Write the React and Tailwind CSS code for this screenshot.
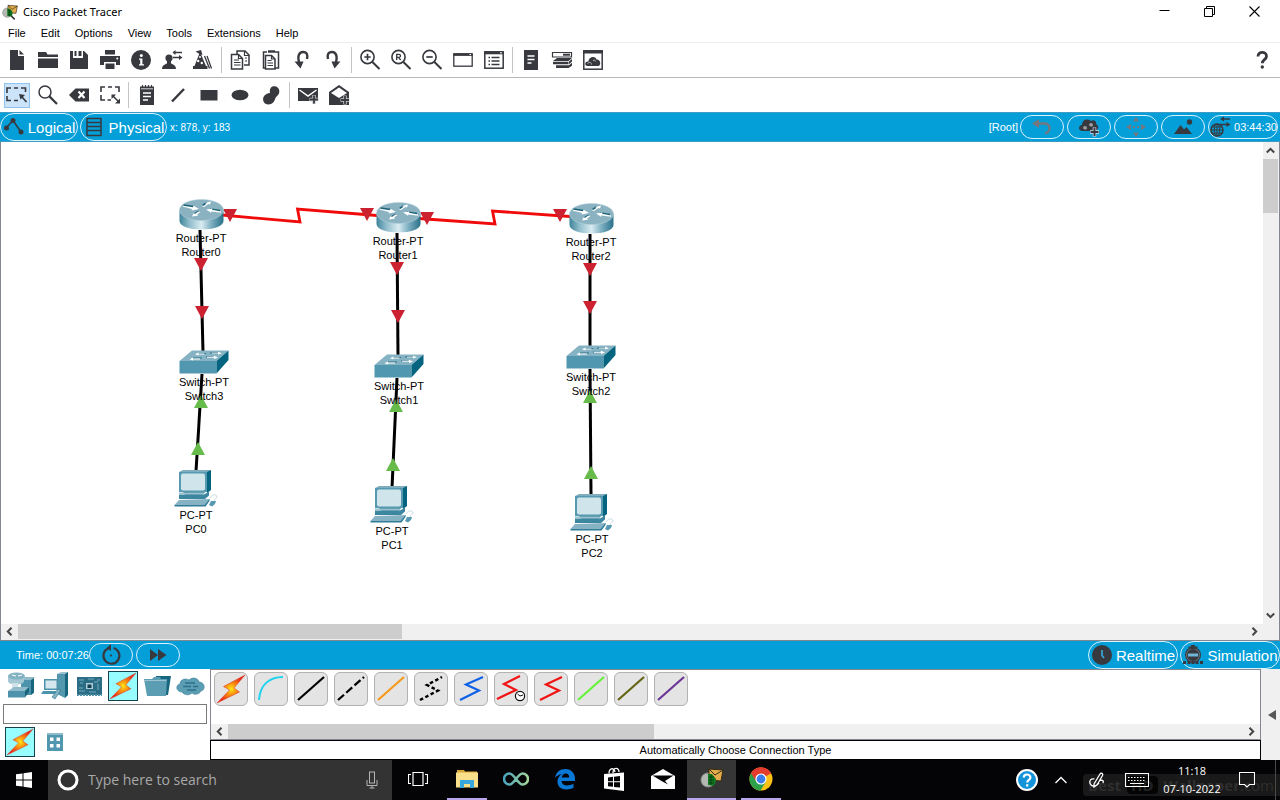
import React from "react";

const INK = "#37393f";

function Icon({ children, className = "size-[22px]", box = "0 0 22 22" }) {
  return (
    <svg viewBox={box} className={`${className} shrink-0`} fill="none" aria-hidden="true">
      {children}
    </svg>
  );
}

function ToolButton({ label, children, active }) {
  return (
    <button
      aria-label={label}
      title={label}
      className="flex h-[26px] w-[31px] shrink-0 items-center justify-center"
    >
      <span
        className={
          active
            ? "flex h-[25px] w-[26px] items-center justify-center border border-[#8fc3ee] bg-[#cce4f9]"
            : "flex items-center justify-center"
        }
      >
        {children}
      </span>
    </button>
  );
}

function Separator() {
  return (
    <div className="flex w-1.5 shrink-0 justify-center">
      <div className="h-[26px] w-px bg-[#c4c4c4]" />
    </div>
  );
}

function Magnifier({ children }) {
  return (
    <Icon>
      <circle cx="8.5" cy="8" r="6.6" stroke={INK} strokeWidth="1.6" />
      <path d="M13.4 13 L20.5 20" stroke={INK} strokeWidth="2" />
      {children}
    </Icon>
  );
}

const fileTools = [
  ["New", <Icon><path d="M4 1h8v6h6v14H4z M13.5 1 L18 5.5 H13.5z" fill={INK} /></Icon>],
  ["Open", <Icon><path d="M1 3h8l1.5 2.5H21V8H1z M1 9.5h20V19H1z" fill={INK} /></Icon>],
  ["Save", <Icon><path d="M2 2h3v7h10V2h1l4 4v14H2z" fill={INK} /><path d="M10.5 2h3v5h-3z M6.5 2h2v5h-2z" fill={INK} /></Icon>],
  ["Print", <Icon><path d="M6 1h10v4.5H6z M1 7h20v9h-4v-3H5v3H1z M6.5 14.5h9V20h-9z" fill={INK} /><circle cx="18.3" cy="9.4" r="1" fill="#fff" /></Icon>],
  ["Info", <Icon><circle cx="11" cy="11" r="10" fill={INK} /><circle cx="11.3" cy="6.5" r="1.5" fill="#fff" /><path d="M9 9.5h3.4v5.8H14v1.2H9v-1.2h1.2v-4.6H9z" fill="#fff" /></Icon>],
  ["User Profile", <Icon><circle cx="8" cy="9" r="3.6" fill={INK} /><path d="M1 20c0-4 3-4.600 5-5.600V11h4v3.400c2 1 5 1.600 5 5.600z" fill={INK} /><path d="M12.500 3.500H21M12 8.500h6.500" stroke={INK} strokeWidth="1.300" /><path d="M14.500 1v5l-3-2.500z M18 6v5l3.500-2.500z" fill={INK} /></Icon>],
  ["Activity Wizard", <Icon><path d="M8 3l6 14H2.500z M1 17h14.500v3H1z" fill={INK} /><path d="M3.500 2.500l5.500-1.500 1.500 5-3-1z" fill={INK} /><circle cx="8" cy="8" r="1" fill="#fff" /><circle cx="6.200" cy="12" r="1.200" fill="#fff" /><circle cx="9.800" cy="14" r="1.200" fill="#fff" /><path d="M12.500 7l5 12.500M15 7l4.500 12.500" stroke={INK} strokeWidth="1.300" /></Icon>],
];

const editTools = [
  ["Copy", <Icon><path d="M8 5V2h8l4 4v10h-5" stroke={INK} strokeWidth="1.500" /><path d="M15.500 2v4.500H20" stroke={INK} strokeWidth="1.200" /><path d="M2.500 5.500h7l4 4v10.500h-11z" stroke={INK} strokeWidth="1.500" fill="#fff" /><path d="M9.500 5.500v4h4M5 11h5M5 13.500h6.500M5 16h6.500M16 9h2M16 12h2" stroke={INK} strokeWidth="1.200" /></Icon>],
  ["Paste", <Icon><path d="M7 3H3.500v16H6M15 3h3.500v16H15" stroke={INK} strokeWidth="1.500" /><path d="M8 2.500h7" stroke={INK} strokeWidth="2.500" /><path d="M5.500 6.500h6l3.500 3.500v10H5.500z" stroke={INK} strokeWidth="1.500" fill="#fff" /><path d="M11.500 6.500V10H15M7.500 11.500h4M7.500 14h5.500M7.500 16.500h5.500" stroke={INK} strokeWidth="1.200" /></Icon>],
  ["Undo", <Icon><path d="M8.500 15C6 7 8 3 12 3c4 0 5 3 4 7" stroke={INK} strokeWidth="2.400" /><path d="M3.500 12.500h9l-3 7z" fill={INK} /></Icon>],
  ["Redo", <Icon><path d="M13.500 15C16 7 14 3 10 3C6 3 5 6 6 10" stroke={INK} strokeWidth="2.400" /><path d="M18.500 12.500h-9l3 7z" fill={INK} /></Icon>],
];

const viewTools = [
  ["Zoom In", <Magnifier><path d="M8.500 4.800v6.400M5.300 8h6.400" stroke={INK} strokeWidth="1.700" /></Magnifier>],
  ["Zoom Reset", <Magnifier><path d="M6.700 11V5.300h2.300a1.500 1.500 0 010 3H6.700M8.600 8.300l2 2.700" stroke={INK} strokeWidth="1.300" /></Magnifier>],
  ["Zoom Out", <Magnifier><path d="M5.300 8h6.400" stroke={INK} strokeWidth="1.700" /></Magnifier>],
  ["View Window", <Icon><rect x="1.800" y="4.800" width="18.400" height="12.400" stroke={INK} strokeWidth="1.300" /><path d="M1.500 5.700h19" stroke={INK} strokeWidth="2.400" /><path d="M17.500 5.500h1.500" stroke="#fff" /></Icon>],
  ["View Command Log", <Icon><rect x="1.800" y="2.800" width="18.400" height="16.400" stroke={INK} strokeWidth="1.500" /><path d="M1.500 4h19" stroke={INK} strokeWidth="2.600" /><path d="M17 3.800h2" stroke="#fff" /><path d="M5.500 8.500h1.500M8.500 8.500h8M5.500 12h1.500M8.500 12h8M5.500 15.500h1.500M8.500 15.500h8" stroke={INK} strokeWidth="1.400" /></Icon>],
];

const deviceTools = [
  ["Notes Panel", <Icon><path d="M4 1h14v20H4z" fill={INK} /><path d="M7.500 7h7M7.500 10.500h7M7.500 14h4" stroke="#fff" strokeWidth="1.300" /></Icon>],
  ["Custom Devices", <Icon><path d="M1.500 3.500h19v4.500h-19z" stroke={INK} strokeWidth="1.200" /><path d="M12 5.700h7" stroke={INK} strokeWidth="2" /><path d="M2 12l4-3h15l-3.500 3z M2 12.800h15.500v2.400H2z M18 12.500l3-2.500v2.500l-3 2.700z M5 16.200h13l3-2.500v3L17.500 19H5z" fill={INK} /></Icon>],
  ["Cloud View", <Icon><rect x="1.800" y="1.800" width="18.400" height="18.400" stroke={INK} strokeWidth="1.500" /><path d="M1 3h20" stroke={INK} strokeWidth="3" /><path d="M5 17c-3-1-2-5 1.500-4.500C6.500 7 14 6.500 14.500 10.500c4-.5 5 5.500 2 6.500z" fill={INK} /><path d="M5.500 14.500c2-2 4-1 4 1M11 11.500c1.500-1 2.500 0 2.500 1" stroke="#bbb" /></Icon>],
];

const selectTools = [
  ["Select", <Icon><path d="M1 9V4h4M8 4h4M15 4h4.500v4M1 12v4.500h4M8 16.500h4" stroke={INK} strokeWidth="1.600" /><path d="M13 10l6 1-4.500 4.500z" fill={INK} /><path d="M15.500 12.500l5 5.500" stroke={INK} strokeWidth="1.700" /></Icon>, true],
  ["Inspect", <Icon><circle cx="8" cy="8" r="6" stroke={INK} strokeWidth="1.500" /><path d="M12.400 12.400l7.600 7.600" stroke={INK} strokeWidth="2.200" /></Icon>],
  ["Delete", <Icon><path d="M7.500 4.500H21v13H7.500L1 11z" fill={INK} /><path d="M10.500 7.500l6 6.500M16.500 7.500l-6 6.500" stroke="#fff" strokeWidth="2.200" /></Icon>],
  ["Resize", <Icon><path d="M2 8V3h4M9 3h4M16 3h4v5M2 11v5h4M8.500 16H12" stroke={INK} strokeWidth="1.600" /><path d="M12.500 10.500h4.500l-4.500 4.500z M21 14.500V19.500h-5z" fill={INK} /><path d="M14 12l6 6" stroke={INK} strokeWidth="1.500" /></Icon>],
];

const drawTools = [
  ["Place Note", <Icon><path d="M4 2.500h14V21H4z" fill={INK} /><path d="M6.500 1v4M9.500 1v4M12.500 1v4M15.500 1v4" stroke={INK} strokeWidth="1.200" /><path d="M5 4.800h12" stroke="#fff" strokeWidth=".8" /><path d="M7 9h8M7 12.500h8M7 16h5" stroke="#fff" strokeWidth="1.400" /></Icon>],
  ["Draw Line", <Icon><path d="M5 17.500L17 5" stroke={INK} strokeWidth="2.500" /></Icon>],
  ["Draw Rectangle", <Icon><path d="M2.500 6h17v10.500h-17z" fill={INK} /></Icon>],
  ["Draw Ellipse", <Icon><ellipse cx="11" cy="11" rx="8.500" ry="5.200" fill={INK} /></Icon>],
  ["Draw Freeform", <Icon><path d="M10 9C9 3 13 1.500 16 2.500c4 1.500 4.500 7 1 9.500-2 1.500-1.500 3-3 5.500-2.500 4-9 4-10.500 0C2 13 5 9.500 10 9z" fill={INK} /></Icon>],
];

const pduTools = [
  ["Add Simple PDU", <Icon><path d="M1 4h20v13H1z" fill={INK} /><path d="M2.500 6l8.500 6 8.500-6" stroke="#fff" strokeWidth="1.500" /><path d="M17 11v9M12.500 15.500h9" stroke="#c9c9cb" strokeWidth="3.400" /><path d="M17 11.500v8M13 15.500h8" stroke={INK} strokeWidth="1.800" /></Icon>],
  ["Add Complex PDU", <Icon><path d="M1 8L11 1l10 7v13H1z" fill={INK} /><path d="M3 9L11 3.500 19 9l-8 5z" fill="#fff" /><path d="M17 11.500v9M12.500 16h9" stroke="#c9c9cb" strokeWidth="3.400" /><path d="M17 12v8M13 16h8" stroke={INK} strokeWidth="1.800" /></Icon>],
];

function ToolGroup({ items }) {
  return items.map(([label, icon, active]) => (
    <ToolButton key={label} label={label} active={active}>{icon}</ToolButton>
  ));
}

function PacketTracerLogo({ className }) {
  return (
    <Icon className={className} box="0 0 24 24">
      <circle cx="8" cy="13" r="7" fill="#b4b8b3" stroke="#8b8f8b" />
      <path d="M9 2l14 1-2 11-12-1z" fill="#e3ad4d" stroke="#3a2c10" strokeWidth="1" />
      <path d="M9 2l6 6 8-5" stroke="#3a2c10" />
      <path d="M8 7h4l4 5-1 7-7-1z" fill="#0f7a22" />
      <path d="M9 10h5M9 13h5M9 16h5M11 8v10" stroke="#05380d" strokeWidth=".8" />
      <path d="M14 18l5 5" stroke="#333" strokeWidth="2.500" />
    </Icon>
  );
}

function Pill({ label, children, className }) {
  return (
    <button
      aria-label={label}
      className={`flex shrink-0 items-center justify-center rounded-full border border-[#d9f2fd] text-white ${className}`}
    >
      {children}
    </button>
  );
}

function Chevron({ d }) {
  return (
    <Icon className="size-[9px]" box="0 0 9 9">
      <path d={d} stroke="#444" strokeWidth="2" />
    </Icon>
  );
}

const chevrons = {
  left: "M6.500 .8L2.800 4.500l3.700 3.700",
  right: "M2.500 .8l3.700 3.700-3.700 3.700",
  up: "M.8 6.500l3.700-3.700 3.700 3.700",
  down: "M.8 2.500l3.700 3.700 3.700-3.700",
};

function HorizontalScrollbar({ thumb }) {
  return (
    <div className="flex h-[15px] min-w-0 flex-1 bg-[#f0f0f0]">
      <button aria-label="Scroll left" className="flex w-[17px] items-center justify-center">
        <Chevron d={chevrons.left} />
      </button>
      <div className="min-w-0 flex-1">
        <div className={`h-full bg-[#cdcdcd] ${thumb}`} />
      </div>
      <button aria-label="Scroll right" className="flex w-[17px] items-center justify-center">
        <Chevron d={chevrons.right} />
      </button>
    </div>
  );
}

function RouterIcon() {
  return (
    <svg viewBox="0 0 45 31" className="h-[31px] w-[45px]" aria-hidden="true">
      <defs>
        <linearGradient id="routerSide">
          <stop offset="0" stopColor="#3e8499" />
          <stop offset=".22" stopColor="#8fbccb" />
          <stop offset=".5" stopColor="#d9ebf1" />
          <stop offset=".72" stopColor="#7fb0c2" />
          <stop offset="1" stopColor="#2a7189" />
        </linearGradient>
      </defs>
      <path d="M.5 11v11c0 5 10 8.500 22 8.500s22-3.500 22-8.500V11z" fill="url(#routerSide)" />
      <ellipse cx="22.500" cy="11" rx="22" ry="10.500" fill="#8ab2c1" stroke="#b3d0da" strokeWidth=".6" />
      <g stroke="#1d6379" strokeWidth="2.400" fill="none">
        <path d="M4.500 6.500l10 1.500M24 6.500l4-2.500M20 12.500l-4 2.500M31 10.500l10 1.500" />
      </g>
      <g fill="#fff">
        <path d="M4 6.800l10 1.400.5-1.500 5.500 3.300-7.500 1.500.5-1.600L4 7.800z" />
        <path d="M23 8l4.500-3.200-1.500-.8 6-1.500-1 3-1.500-.5-4.500 3z" />
        <path d="M21.500 13l-3.500 2.700 1.500.8-6.500 1 1.500-3 1.500.4 3.300-2.400z" />
        <path d="M42 12.500l-9-1.700.4-1.300-6.400 1 5 3.300.4-1.300 9.600 1.300z" />
      </g>
    </svg>
  );
}

function SwitchIcon() {
  return (
    <svg viewBox="0 0 50 24" className="h-6 w-[50px]" aria-hidden="true">
      <path d="M.5 11L13 .5h36.500L37.500 11z" fill="#86b3c4" />
      <path d="M.5 11h37v12.500H.5z" fill="#5097af" />
      <path d="M37.500 11l12-10.500v9.500l-12 13.500z" fill="#05647f" />
      <path d="M18 3.500h9M31 3h9M14 8h9M27 7h7" stroke="#2b6f85" strokeWidth="1" />
      <path d="M16 4.200l3.500-1.700v1h6v.9h-6v1zM43 3.200l-4-1.500v1h-6v.9h6v1zM10.500 9.200l3.500-1.700v1h7v.9h-7v1zM39 7.500l-4-1.700v1h-7v.9h7v1.200z" fill="#fff" />
    </svg>
  );
}

function PcIcon() {
  return (
    <svg viewBox="0 0 44 38" className="h-[38px] w-11" aria-hidden="true">
      <path d="M5 3L9 1h28l-4 3z" fill="#80adbd" />
      <path d="M33 3l4-2v20l-4 3z" fill="#05647f" />
      <path d="M5 3h28v20H5z" fill="#5699b0" />
      <rect x="7" y="4.500" width="24" height="17" rx="2" fill="#d0e4ec" />
      <path d="M9 23h22l-3 4H12z" fill="#2d7c95" />
      <path d="M5 25.500h25l5-3v4l-4 3.500H5z" fill="#3c86a0" />
      <path d="M5 23.500h26l-2 2H5z" fill="#9cc2cf" />
      <path d="M5 31l31-1-5 6H.5z" fill="#86b3c4" />
      <path d="M.5 36h30l5-6v2l-4 5.500H.5z" fill="#2f7d96" />
      <path d="M37 32h5l-1 3-3 2.500-3-1.500z" fill="#5699b0" />
      <path d="M36 29c2-4 7-4 7-1 0 1.500-3 1.500-3 4" stroke="#b9d0d9" strokeWidth=".8" fill="none" />
    </svg>
  );
}

const deviceIcons = { router: RouterIcon, switch: SwitchIcon, pc: PcIcon };

const devices = [
  ["router", "Router-PT", "Router0", "left-[174px] top-[57px]"],
  ["router", "Router-PT", "Router1", "left-[371px] top-[60px]"],
  ["router", "Router-PT", "Router2", "left-[564px] top-[61px]"],
  ["switch", "Switch-PT", "Switch3", "left-[177px] top-[208px]"],
  ["switch", "Switch-PT", "Switch1", "left-[372px] top-[212px]"],
  ["switch", "Switch-PT", "Switch2", "left-[564px] top-[203px]"],
  ["pc", "PC-PT", "PC0", "left-[169px] top-[327px]"],
  ["pc", "PC-PT", "PC1", "left-[365px] top-[343px]"],
  ["pc", "PC-PT", "PC2", "left-[565px] top-[351px]"],
];

const straightCables = [
  [200, 230, 203, 352], [202, 374, 196, 471],
  [397, 233, 398, 356], [397, 378, 392, 488],
  [590, 234, 590, 347], [590, 369, 591, 495],
];
const downLinks = [
  [230, 215], [367, 214], [427, 218], [560, 215], [201, 264], [202, 312],
  [397, 268], [398, 316], [590, 269], [590, 307],
];
const upLinks = [[201, 402], [198, 449], [396, 406], [393, 465], [590, 397], [591, 473]];

function Cables() {
  return (
    <svg viewBox="1 142 700 482" className="absolute left-0 top-0 h-[482px] w-[700px]" aria-hidden="true">
      <g stroke="#000" strokeWidth="3">
        {straightCables.map(([a, b, c, d]) => <line key={`${a}-${b}`} x1={a} y1={b} x2={c} y2={d} />)}
      </g>
      <g stroke="#f00a0a" strokeWidth="2.800" fill="none">
        <path d="M222 215L300 222L297.500 209L377 215.500" />
        <path d="M419 218.500L495 224L492.500 211L570 216.500" />
      </g>
      <g fill="#cc2130">
        {downLinks.map(([x, y]) => <path key={`${x}-${y}`} d={`M${x - 7} ${y - 6}h14l-7 13z`} />)}
      </g>
      <g fill="#66bb4a">
        {upLinks.map(([x, y]) => <path key={`${x}-${y}`} d={`M${x - 7} ${y + 6}h14l-7-13z`} />)}
      </g>
    </svg>
  );
}

function Canvas() {
  return (
    <main className="relative min-w-0 flex-1 overflow-hidden bg-white">
      <Cables />
      {devices.map(([kind, model, name, place]) => {
        const Drawing = deviceIcons[kind];
        return (
          <div key={name} className={`absolute flex w-[52px] flex-col items-center text-center text-[11px] leading-[14px] text-black ${place}`}>
            <Drawing />
            <span className="mt-px whitespace-nowrap">{model}</span>
            <span>{name}</span>
          </div>
        );
      })}
    </main>
  );
}

function Bolt({ className = "size-[30px]" }) {
  return (
    <svg viewBox="0 0 30 30" className={className} aria-hidden="true">
      <defs>
        <radialGradient id="boltFill">
          <stop offset="0" stopColor="#ffe81a" />
          <stop offset=".4" stopColor="#f9920f" />
          <stop offset="1" stopColor="#e8231a" />
        </radialGradient>
      </defs>
      <path d="M29 1L7.500 12.500l6 3.500L1 29l22.500-11-5.500-4z" fill="url(#boltFill)" stroke="#d8341a" strokeWidth=".5" />
    </svg>
  );
}

const cables = [
  ["Automatic", <Bolt className="size-[30px]" />],
  ["Console", <path d="M5 28C6 13 15 5 29 5" stroke="#22d3ee" strokeWidth="2" />],
  ["Copper Straight-Through", <path d="M4 28L30 5" stroke="#000" strokeWidth="2.200" />],
  ["Copper Cross-Over", <path d="M4 28L30 5" stroke="#000" strokeWidth="2.200" strokeDasharray="8 3" />],
  ["Fiber", <path d="M4 28L30 5" stroke="#f59a1b" strokeWidth="2.200" />],
  ["Phone", <path d="M6 28L24 18.500L13 13L28 5" stroke="#000" strokeWidth="2.400" strokeDasharray="3.500 2.500" />],
  ["Coaxial", <path d="M6 28L25 18.500L12 12.500L29 5" stroke="#0f62e8" strokeWidth="2.200" />],
  ["Serial DCE", <g><path d="M3 27L22 18L10 12L26 4" stroke="#f01414" strokeWidth="2.200" /><circle cx="26" cy="24" r="4.600" fill="#fff" stroke="#111" strokeWidth="1.200" /><path d="M26 24l-2.500-2M26 24l3-1" stroke="#111" /></g>],
  ["Serial DTE", <path d="M6 28L25 18.500L12 12.500L28 5" stroke="#f01414" strokeWidth="2.200" />],
  ["Octal", <path d="M4 28L30 5" stroke="#66f23c" strokeWidth="2.200" />],
  ["IoT Custom Cable", <path d="M4 28L30 5" stroke="#646414" strokeWidth="2.200" />],
  ["USB", <path d="M4 28L30 5" stroke="#6a3594" strokeWidth="2.200" />],
];

const categories = [
  ["Network Devices", <Icon className="size-[30px]" box="0 0 30 30"><path d="M15 9h13v13l-3 2H15z" fill="#4c93ab" /><path d="M13 9l4-3h12l-3 3z" fill="#8fbaca" /><path d="M25 9l3-2v14l-3 3z" fill="#17667e" /><path d="M2 5v5c0 2.500 4 3.500 8 3.500s8-1 8-3.500V5z" fill="#a4c7d3" /><ellipse cx="10.500" cy="5" rx="8.500" ry="3.500" fill="#83b2c2" /><path d="M6 4l4 1M12 5l4-1" stroke="#fff" /><path d="M6 12h6v5H6z" fill="#cfe2e9" /><path d="M2 20l6-4h15l-4 4z" fill="#8fbaca" /><path d="M2 20h17v6.500H2z" fill="#4c93ab" /><path d="M19 20l4-4v5l-4 5.500z" fill="#17667e" /></Icon>],
  ["End Devices", <Icon className="size-[30px]" box="0 0 30 30"><path d="M17 3l4-2h7l-3 2z" fill="#9cc2cf" /><path d="M17 3h8v24l-8-4z" fill="#5398af" /><path d="M25 3l3-2v23l-3 3z" fill="#17667e" /><rect x="4" y="8" width="14" height="11" fill="#4c93ab" /><rect x="5.500" y="9.500" width="11" height="8" fill="#d5e7ee" /><path d="M3 20h14l-2 3H1z" fill="#4c93ab" /><path d="M12 26l6-8 3 1-6 9z" fill="#86b3c4" stroke="#17667e" strokeWidth=".5" /></Icon>],
  ["Components", <Icon className="size-[30px]" box="0 0 30 30"><path d="M3 6h25v18H3z" fill="#2b6d85" /><path d="M5 9h5M14 8h6M23 9h3M5 20h6M15 21h7M5 17h4M24 13v6M20 11h4M6 12h3" stroke="#5a96ac" strokeWidth="1.500" /><path d="M12 12h7v6h-7z" fill="#aacbd7" /><path d="M13.500 13.500h4v3.500h-4z" fill="#123f50" /><path d="M3 24h25" stroke="#4c93ab" strokeWidth="2" strokeDasharray="2 1" /></Icon>],
  ["Connections", <Bolt className="size-7" />, true],
  ["Miscellaneous", <Icon className="size-[30px]" box="0 0 30 30"><path d="M14 5h15l-3 19H12z" fill="#17667e" /><path d="M2 8h8l2-2h6l1 2h6l-1 17H5z" fill="#5b9db3" /><path d="M2.500 9.500h22" stroke="#9cc2cf" /></Icon>],
  ["Multiuser Connection", <Icon className="size-[30px]" box="0 0 30 30"><path d="M6 21c-6 0-7-7-2-8 0-5 6-6 9-4 4-4 10-1 10 2 6 0 7 8 2 9-2 4-7 4-9 2-3 3-8 2-10-1z" fill="#5b9db3" stroke="#3f8199" strokeWidth=".6" /><path d="M9 12h10M7 15.500h8M11 19h9M17 15.500h5" stroke="#2d728a" strokeWidth="1.300" /></Icon>],
];

function SelectableIcon({ label, active, children }) {
  return (
    <button
      aria-label={label}
      title={label}
      className={
        active
          ? "flex size-[30px] items-center justify-center border border-[#16414f] bg-[#98fdff]"
          : "flex size-[30px] items-center justify-center"
      }
    >
      {children}
    </button>
  );
}

function BottomPanel() {
  return (
    <section className="flex h-[91px] shrink-0 bg-[#f0f0f0]">
      <div className="flex w-[210px] shrink-0 flex-col bg-white pl-[3px] pr-[3px] pt-0.5">
        <div className="flex gap-1 pl-[3px]">
          {categories.map(([label, icon, active]) => (
            <SelectableIcon key={label} label={label} active={active}>{icon}</SelectableIcon>
          ))}
        </div>
        <input aria-label="Search devices" className="mt-[3px] h-5 w-full border border-[#7a7a7a] bg-white px-1 text-[11px] outline-none" />
        <div className="mt-[3px] flex gap-[5px] pl-0.5">
          <SelectableIcon label="Connections" active><Bolt className="size-7" /></SelectableIcon>
          <SelectableIcon label="Structured Cabling">
            <Icon className="size-[18px]" box="0 0 18 18">
              <path d="M1 0h16v18H1z" fill="#5097af" />
              <path d="M1 0h16v2H1z" fill="#8fbaca" />
              <path d="M4 4.500h3.500V8H4zM10.500 4.500H14V8h-3.500zM4 11h3.500v3.500H4zM10.500 11H14v3.500h-3.500z" fill="#fff" />
            </Icon>
          </SelectableIcon>
        </div>
      </div>
      <div className="flex min-w-0 flex-1 flex-col">
        <div className="flex min-h-0 flex-1 flex-col border border-[#828790] bg-white">
          <div className="flex flex-1 gap-1.5 pl-[3px] pt-0.5">
            {cables.map(([label, art]) => (
              <button
                key={label}
                aria-label={label}
                title={label}
                className="flex size-[34px] shrink-0 items-center justify-center rounded-md border border-[#b2b2b2] bg-[#e4e4e4]"
              >
                {label === "Automatic" ? art : <Icon className="size-8" box="1 1 32 32">{art}</Icon>}
              </button>
            ))}
          </div>
          <div className="flex h-[15px] shrink-0">
            <HorizontalScrollbar thumb="w-[42%]" />
          </div>
        </div>
        <div className="flex h-5 shrink-0 items-center justify-center border border-black bg-white text-[11px] text-black">
          Automatically Choose Connection Type
        </div>
      </div>
      <button aria-label="Collapse panel" className="flex w-[19px] shrink-0 items-center justify-end pr-1">
        <Icon className="h-[10px] w-2" box="0 0 8 10"><path d="M8 0v10L0 5z" fill="#555" /></Icon>
      </button>
    </section>
  );
}

function TaskButton({ label, children, open, current }) {
  return (
    <button
      aria-label={label}
      className={`flex h-10 w-[49px] items-stretch justify-center ${current ? "bg-[#363636]" : ""}`}
    >
      <span
        className={`flex items-center justify-center border-b-2 ${current ? "w-full" : "w-10"} ${open ? "border-[#b9a5ee]" : "border-transparent"}`}
      >
        {children}
      </span>
    </button>
  );
}

function Taskbar() {
  return (
    <footer className="relative flex h-10 shrink-0 items-center overflow-hidden bg-[#040406] font-['Open_Sans','Noto_Sans',sans-serif] text-white">
      <button aria-label="Start" className="flex h-10 w-12 shrink-0 items-center justify-center">
        <Icon className="size-4" box="0 0 16 16">
          <path d="M0 2.300L6.500 1.400V7.500H0zM7.500 1.200L16 0v7.500H7.500zM0 8.500h6.500v6.100L0 13.700zM7.500 8.500H16V16l-8.500-1.200z" fill="#fff" />
        </Icon>
      </button>
      <label className="flex h-10 w-[344px] shrink-0 items-center bg-[#333] pl-[9px] pr-3.5">
        <Icon className="size-[22px]"><circle cx="11" cy="11" r="9" stroke="#fff" strokeWidth="3" /></Icon>
        <input
          aria-label="Search"
          placeholder="Type here to search"
          className="ml-[9px] min-w-0 flex-1 bg-transparent text-sm text-white outline-none placeholder:text-[#a9a9a9]"
        />
        <Icon className="h-[18px] w-3" box="0 0 12 18"><rect x="3.500" y="1" width="5" height="11" stroke="#b5b5b5" /><path d="M1 9v5.500h10V9M6 14.500V17M3.500 17h5" stroke="#b5b5b5" /></Icon>
      </label>
      <nav className="flex flex-1 pl-px">
        <TaskButton label="Task View">
          <Icon className="size-5" box="0 0 20 20"><path d="M5 3.500h10v13H5zM3 5.500H.5v9H3M17 5.500h2.500v9H17" stroke="#fff" strokeWidth="1.200" /></Icon>
        </TaskButton>
        <TaskButton label="File Explorer" open>
          <Icon className="size-[22px]"><path d="M1 2h7l1 1.500h12V7H1z" fill="#d9a83a" /><path d="M0 4.500h22v15H0z" fill="#fbe08c" /><path d="M4 20v-8h14v8h-4v-4H8v4z" fill="#38a8dc" /></Icon>
        </TaskButton>
        <TaskButton label="Arduino">
          <Icon className="h-4 w-[26px]" box="0 0 26 16">
            <defs><linearGradient id="loop"><stop offset="0" stopColor="#4aa3bd" /><stop offset="1" stopColor="#a3d79a" /></linearGradient></defs>
            <path d="M13 8C10 4 8 2.500 6.500 2.500a5.500 5.500 0 000 11C8 13.500 10 12 13 8s5-5.500 6.500-5.500a5.500 5.500 0 010 11C18 13.500 16 12 13 8z" stroke="url(#loop)" strokeWidth="2.600" />
          </Icon>
        </TaskButton>
        <TaskButton label="Edge">
          <Icon className="size-[22px]">
            <path d="M1 10C2 4 6 1 11.500 1 17.500 1 21 5.500 21 10.500V13H7.500c.3 3 2.700 4.500 5.500 4.500 2.500 0 4.500-.6 6.500-1.700v4C17.500 21 15 21.500 12.500 21.500 7 21.500 3.500 18.500 3.500 13.500c0-3.500 2-6 4.500-7.500C5 6.500 2.500 8 1 10zM7.700 9.500h7.500C15.200 7 14 5.500 11.700 5.500c-2.200 0-3.600 1.700-4 4z" fill="#0a78d6" />
          </Icon>
        </TaskButton>
        <TaskButton label="Microsoft Store">
          <Icon className="h-6 w-[22px]" box="0 0 22 24"><path d="M6 6.500C6 1 11 0 12 5M10 6C10 0 16 0 16 5" stroke="#fff" strokeWidth="1.300" /><path d="M1 7l20-1.500V24L1 21.500z" fill="#fff" /><path d="M5 10.500l5-.7v4.500H5zM11 9.700l6-.7v5.300h-6zM5 15.300h5v4.500l-5-.6zM11 15.300h6v5.300l-6-.7z" fill="#050507" /></Icon>
        </TaskButton>
        <TaskButton label="Mail">
          <Icon className="h-5 w-6" box="0 0 24 20"><path d="M0 7l12-7 12 7v13H0z" fill="#fff" /><path d="M1.500 6.500h21L14 12l3 3.500L10.500 12z" fill="#050507" /></Icon>
        </TaskButton>
        <TaskButton label="Cisco Packet Tracer" open current>
          <PacketTracerLogo className="size-6" />
        </TaskButton>
        <TaskButton label="Chrome" open>
          <Icon className="size-6" box="0 0 24 24">
            <circle cx="12" cy="12" r="11.500" fill="#fbc116" />
            <path d="M12 12L2 6.200A11.500 11.500 0 0122 6.200z" fill="#e33b2e" />
            <path d="M12 12l4.800 3-5.300 8.500A11.500 11.500 0 012 6.200z" fill="#2da14a" />
            <path d="M12 6.500h10.100a11.500 11.500 0 00-20-.3L7 14z" fill="#e33b2e" />
            <circle cx="12" cy="12" r="5.600" fill="#fff" /><circle cx="12" cy="12" r="4.400" fill="#3b7ded" />
          </Icon>
        </TaskButton>
      </nav>
      <div aria-hidden="true" className="absolute bottom-1 right-0 flex h-[22px] w-[197px] items-center gap-1.5 overflow-hidden rounded-l bg-[#191919] pl-[5px] text-[15px] font-bold text-[#2e2e2e]">
        <span>Best</span>
        <span className="rounded-sm bg-[#040404] px-1 leading-[18px] text-[#222]">HD</span>
        <span>Wallpaper<span className="font-normal">.com</span></span>
      </div>
      <div className="relative flex h-10 items-center">
        <button aria-label="Help" className="flex w-[34px] justify-center">
          <Icon className="size-[22px]"><circle cx="11" cy="11" r="10" fill="#1593d8" stroke="#fff" strokeWidth="2" /><path d="M7.800 8.500c0-4 6.600-4 6.600 0 0 2.500-3.200 2.300-3.200 5M11.200 15.200v2.200" stroke="#fff" strokeWidth="2.200" /></Icon>
        </button>
        <button aria-label="Show hidden icons" className="flex w-[34px] justify-center">
          <Icon className="h-2 w-3" box="0 0 12 8"><path d="M.5 7L6 1.500 11.500 7" stroke="#fff" strokeWidth="1.300" /></Icon>
        </button>
        <button aria-label="Windows Ink" className="flex w-[38px] justify-center">
          <Icon className="size-[18px]" box="0 0 18 18"><path d="M6 13L12 3c1-1.500 3.500-.5 2.500 1.500L9 14l-3 2zM6.500 8C3 7 1 10 2 12.500S7 17 11 12M12 9c3 0 4 1 3 3" stroke="#fff" strokeWidth="1.300" /></Icon>
        </button>
        <button aria-label="Touch keyboard" className="flex w-[42px] justify-center">
          <Icon className="h-[14px] w-6" box="0 0 24 14"><rect x=".5" y=".5" width="23" height="13" stroke="#fff" /><path d="M3 4.500h18M3 7.500h18" stroke="#fff" strokeDasharray="1.500 1.500" /><path d="M5 10.500h14" stroke="#fff" /></Icon>
        </button>
        <time className="flex w-[68px] flex-col items-center text-[11px] leading-[18px]">
          <span>11:18</span>
          <span>07-10-2022</span>
        </time>
        <button aria-label="Notifications" className="flex w-[42px] justify-center">
          <Icon className="h-[18px] w-4" box="0 0 16 18"><path d="M.5 1.500h15v12h-5L8 16l-2.500-2.500h-5z" stroke="#fff" strokeWidth="1.100" /></Icon>
        </button>
        <div className="h-full w-[7px]" />
        <div className="h-full w-px bg-[#4a4a4a]" />
        <div className="h-full w-1" />
      </div>
    </footer>
  );
}

const menus = ["File", "Edit", "Options", "View", "Tools", "Extensions", "Help"];

export default function App() {
  return (
    <div className="flex h-screen min-h-[680px] flex-col overflow-hidden bg-white font-['Liberation_Sans',Arial,sans-serif] text-black">
      <header className="flex h-[23px] shrink-0 items-center">
        <PacketTracerLogo className="ml-0.5 size-4" />
        <h1 className="ml-[5px] flex-1 pt-px font-['Noto_Sans','Open_Sans',sans-serif] text-[11px]">Cisco Packet Tracer</h1>
        <button aria-label="Minimize" className="flex w-[45px] justify-center"><Icon className="size-[11px]" box="0 0 11 11"><path d="M.5 4.500h10" stroke="#000" /></Icon></button>
        <button aria-label="Restore" className="flex w-[45px] justify-center"><Icon className="size-[11px]" box="0 0 11 11"><path d="M.5 2.500h8v8h-8zM2.500 2.500v-2h8v8h-2" stroke="#000" /></Icon></button>
        <button aria-label="Close" className="mr-[3px] flex w-[45px] justify-center"><Icon className="size-[11px]" box="0 0 11 11"><path d="M.5.500l10 10M10.500.500l-10 10" stroke="#000" strokeWidth="1.100" /></Icon></button>
      </header>

      <nav className="flex h-5 shrink-0 items-center gap-[15px] border-b border-[#ededed] pl-2 pt-0.5 text-[11px]">
        {menus.map((menu) => <button key={menu}>{menu}</button>)}
      </nav>

      <div className="flex h-[35px] shrink-0 items-center border-b border-[#b9b9b9] px-px">
        <ToolGroup items={fileTools} />
        <Separator />
        <ToolGroup items={editTools} />
        <Separator />
        <ToolGroup items={viewTools} />
        <Separator />
        <ToolGroup items={deviceTools} />
        <div className="flex-1" />
        <ToolButton label="Help">
          <Icon><path d="M7 7.500c0-5.500 8.500-5.500 8.500-.3 0 3.500-4.200 3.300-4.200 7" stroke={INK} strokeWidth="2.800" /><circle cx="11.300" cy="18" r="1.700" fill={INK} /></Icon>
        </ToolButton>
        <div className="w-0.5" />
      </div>

      <div className="flex h-[34px] shrink-0 items-center pl-px">
        <ToolGroup items={selectTools} />
        <Separator />
        <ToolGroup items={drawTools} />
        <Separator />
        <ToolGroup items={pduTools} />
      </div>

      <div className="flex h-[30px] shrink-0 items-center border-y border-[#3c9cc4] bg-[#049fd9] pr-0.5 text-[11px] text-white">
        <Pill className="h-7 w-[78px] gap-[3px] text-[15px]">
          <Icon><path d="M3 12L10 4.500l8 11.500" stroke={INK} strokeWidth="1.500" /><circle cx="10" cy="4.500" r="2.500" fill={INK} /><circle cx="3.500" cy="12" r="2.500" fill={INK} /><circle cx="18" cy="16" r="2.500" fill={INK} /></Icon>
          <span className="pt-0.5">Logical</span>
        </Pill>
        <Pill className="ml-0.5 h-7 w-[87px] gap-1 text-[15px]">
          <Icon><path d="M4 2.500h14v17H4zM4 6.500h14M4 10.500h14M4 14.500h14" stroke={INK} strokeWidth="1.500" /></Icon>
          <span className="pt-0.5">Physical</span>
        </Pill>
        <span className="ml-[3px] flex-1 text-[10px]">x: 878, y: 183</span>
        <span className="mr-0.5">[Root]</span>
        <div className="flex gap-[3px]">
          <Pill label="Back" className="h-6 w-11">
            <Icon><path d="M6 7.500h8c6 0 6 9.500 0 9.500" stroke="#75787d" strokeWidth="2.300" /><path d="M8 3v9L1 7.500z" fill="#75787d" /></Icon>
          </Pill>
          <Pill label="New Cluster" className="h-6 w-11">
            <Icon><path d="M4 15c-5-1-3-6 0-6 0-5 5-7 9-4 3-2 6 1 5 3 4 2 2 7-1 7z" fill={INK} /><path d="M5 12c1-3 4-2 4 0s-3 2-4 0M11 9c1-3 4-2 4 0s-3 2-4 0" fill="#9a9da0" /><path d="M16.500 11.500v9M12 16h9" stroke="#cde" strokeWidth="3.500" /><path d="M16.500 12v8M12.500 16h8" stroke={INK} strokeWidth="2" /></Icon>
          </Pill>
          <Pill label="Move Object" className="h-6 w-11">
            <Icon><path d="M11 1l3 4.500H8zM11 21l3-4.500H8zM1 11l5-3v6zM21 11l-5-3v6z" fill="#75787d" /><path d="M8 11h2M12 11h2" stroke="#75787d" strokeWidth="2" /></Icon>
          </Pill>
          <Pill label="Set Background" className="h-6 w-11">
            <Icon><path d="M2 18l6.500-9 3.500 4.500 2.500-2.500 5.500 7z" fill={INK} /><circle cx="17.500" cy="6" r="2.700" fill={INK} /></Icon>
          </Pill>
          <Pill label="Environment" className="h-6 w-[70px] gap-[3px]">
            <Icon><circle cx="8" cy="14" r="6" stroke={INK} strokeWidth="1.500" /><ellipse cx="8" cy="14" rx="2.800" ry="6" stroke={INK} /><path d="M2 14h12M3 11h10M3 17h10M8 8v12" stroke={INK} /><path d="M13 3h8M11 8.500h8" stroke={INK} strokeWidth="1.500" /><path d="M15 .5v5l-4-2.500zM17.500 6v5l4-2.500z" fill={INK} /></Icon>
            03:44:30
          </Pill>
        </div>
      </div>

      <div className="flex min-h-0 flex-1 flex-col border-x border-b border-[#828790]">
        <div className="flex min-h-0 flex-1">
          <Canvas />
          <div className="flex w-4 shrink-0 flex-col bg-[#f0f0f0] pr-px">
            <button aria-label="Scroll up" className="flex h-[17px] items-center justify-center"><Chevron d={chevrons.up} /></button>
            <div className="min-h-0 flex-1"><div className="h-[12%] w-full bg-[#cdcdcd]" /></div>
            <button aria-label="Scroll down" className="flex h-[17px] items-center justify-center"><Chevron d={chevrons.down} /></button>
          </div>
        </div>
        <div className="flex h-4 shrink-0 bg-[#f0f0f0] pr-4">
          <HorizontalScrollbar thumb="w-5/16" />
        </div>
      </div>

      <div className="flex h-7 shrink-0 items-center bg-[#049fd9] text-[11px] text-white">
        <span className="w-[89px] whitespace-nowrap pl-4">Time: 00:07:26</span>
        <div className="flex flex-1 gap-[3px]">
          <Pill label="Power Cycle Devices" className="h-6 w-11">
            <Icon><path d="M13.500 4a8 8 0 11-5.500.5" stroke={INK} strokeWidth="2.200" /><path d="M11 0v7L6.500 4z" fill={INK} /><circle cx="11" cy="11.500" r="1.100" fill={INK} /></Icon>
          </Pill>
          <Pill label="Fast Forward Time" className="h-6 w-11">
            <Icon><path d="M3 5l8 6-8 6zM11 5l8.500 6-8.500 6z" fill={INK} /></Icon>
          </Pill>
        </div>
        <div className="flex gap-0.5">
          <Pill className="h-7 w-[90px] gap-[3px] text-[15px]">
            <Icon><circle cx="11" cy="11" r="10" fill={INK} /><path d="M11 6v5.500l2 2.500" stroke="#3aa7d6" strokeWidth="1.700" /></Icon>
            <span className="pt-0.5">Realtime</span>
          </Pill>
          <Pill className="h-7 w-[100px] gap-[3px] text-[15px]">
            <Icon><circle cx="11" cy="11" r="8" fill={INK} /><circle cx="11" cy="11" r="6.500" stroke="#6f8792" strokeWidth=".8" /><path d="M9 1h4v4H9zM6.500 2.500h9v2h-9zM1 17h3v3H1zM5.500 17h3v3h-3zM9.500 17h3v3h-3zM13.500 17h3v3h-3zM18 17h3v3h-3z" fill={INK} /><path d="M6 9.500h10v3H6z" fill="#6fb6d6" /></Icon>
            <span className="pt-0.5">Simulation</span>
          </Pill>
        </div>
      </div>

      <BottomPanel />
      <Taskbar />
    </div>
  );
}
